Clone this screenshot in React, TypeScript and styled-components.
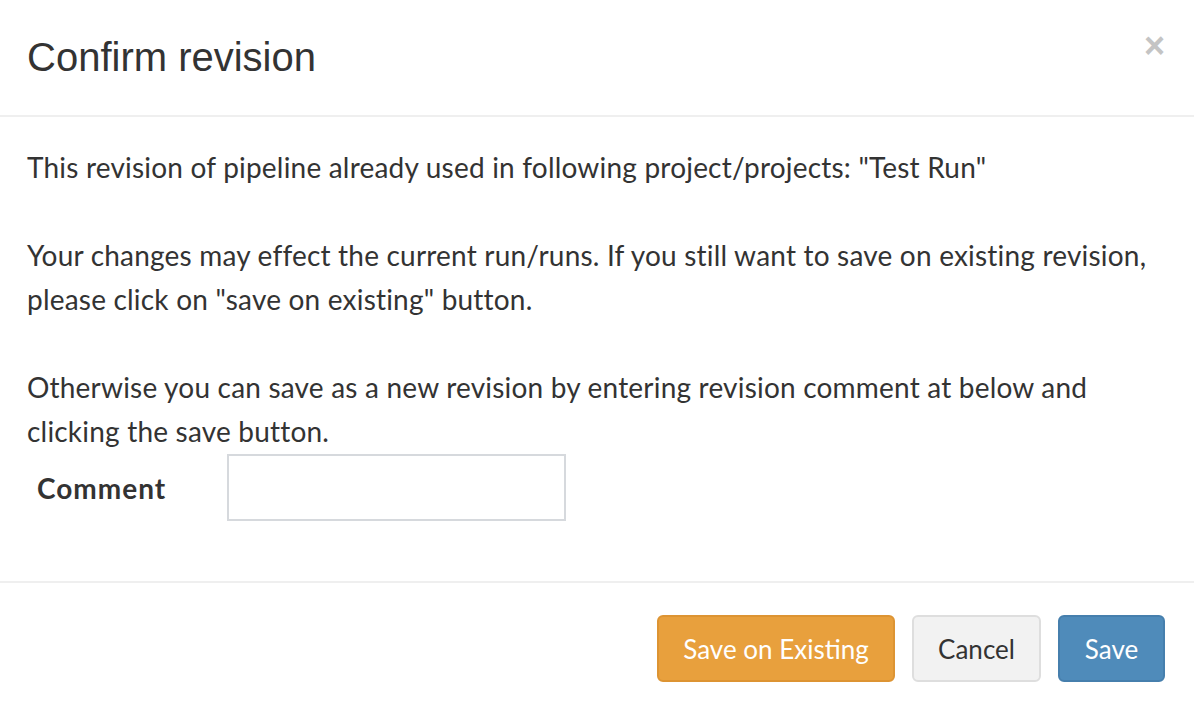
import React from "react";
import styled, { createGlobalStyle } from "styled-components";

const GlobalStyle = createGlobalStyle`
  html, body {
    margin: 0;
    padding: 0;
    background: #fff;
  }
  body {
    font-family: Lato, "Liberation Sans", sans-serif;
    color: #333;
  }
`;

const Modal = styled.div`
  width: 1194px;
  height: 708px;
  background: #fff;
  display: flex;
  flex-direction: column;
  overflow: hidden;
`;

const Header = styled.div`
  height: 117px;
  box-sizing: border-box;
  border-bottom: 2px solid #efefef;
  display: flex;
  align-items: center;
  justify-content: space-between;
  padding: 0 27px 2px 27px;
`;

const Title = styled.h4`
  margin: 0;
  font-family: "Liberation Sans", Arial, sans-serif;
  font-weight: 400;
  font-size: 40px;
  color: #333;
  line-height: 1;
`;

const Close = styled.button`
  border: none;
  background: none;
  padding: 0;
  margin-top: -22px;
  margin-right: 2px;
  color: #c4c4c4;
  font-family: "Liberation Sans", Arial, sans-serif;
  font-weight: 700;
  font-size: 36px;
  line-height: 1;
  cursor: pointer;
`;

const Body = styled.div`
  flex: 1;
  padding: 28px 27px 0 27px;
  border-bottom: 2px solid #efefef;
`;

const Para = styled.p`
  margin: 0 0 44px 0;
  font-size: 28px;
  letter-spacing: 0.2px;
  line-height: 44px;
  &:last-of-type {
    margin-bottom: 0;
  }
`;

const FormRow = styled.div`
  display: grid;
  grid-template-columns: 200px 339px;
  align-items: center;
  margin-top: 1px;
`;

const Label = styled.label`
  padding-left: 10px;
  font-weight: 700;
  font-size: 28px;
  letter-spacing: 1px;
`;

const Input = styled.input`
  height: 67px;
  box-sizing: border-box;
  border: 2px solid #d6d9dd;
  border-radius: 0;
  font-size: 25px;
  padding: 0 12px;
  outline: none;
`;

const Footer = styled.div`
  height: 125px;
  box-sizing: border-box;
  display: flex;
  justify-content: flex-end;
  align-items: flex-start;
  gap: 17px;
  padding: 32px 29px 0 0;
`;

const variants = {
  warning: { bg: "#e8a03d", border: "#dd9433", color: "#fff" },
  default: { bg: "#f2f2f2", border: "#dedede", color: "#333" },
  primary: { bg: "#4f8bba", border: "#467fad", color: "#fff" },
};

const Button = styled.button<{ $variant: keyof typeof variants; $width: number }>`
  width: ${(p) => p.$width}px;
  height: 67px;
  box-sizing: border-box;
  border-radius: 6px;
  border: 2px solid ${(p) => variants[p.$variant].border};
  background: ${(p) => variants[p.$variant].bg};
  color: ${(p) => variants[p.$variant].color};
  font-family: Lato, "Liberation Sans", sans-serif;
  font-size: 26px;
  padding: 0;
  cursor: pointer;
`;

export default function App() {
  return (
    <>
      <GlobalStyle />
      <Modal>
        <Header>
          <Title>Confirm revision</Title>
          <Close aria-label="Close">×</Close>
        </Header>
        <Body>
          <Para>
            This revision of pipeline already used in following project/projects: "Test Run"
          </Para>
          <Para>
            Your changes may effect the current run/runs. If you still want to save on existing
            revision, please click on "save on existing" button.
          </Para>
          <Para>
            Otherwise you can save as a new revision by entering revision comment at below and
            clicking the save button.
          </Para>
          <FormRow>
            <Label htmlFor="comment">Comment</Label>
            <Input id="comment" type="text" />
          </FormRow>
        </Body>
        <Footer>
          <Button $variant="warning" $width={238}>Save on Existing</Button>
          <Button $variant="default" $width={129}>Cancel</Button>
          <Button $variant="primary" $width={107}>Save</Button>
        </Footer>
      </Modal>
    </>
  );
}
